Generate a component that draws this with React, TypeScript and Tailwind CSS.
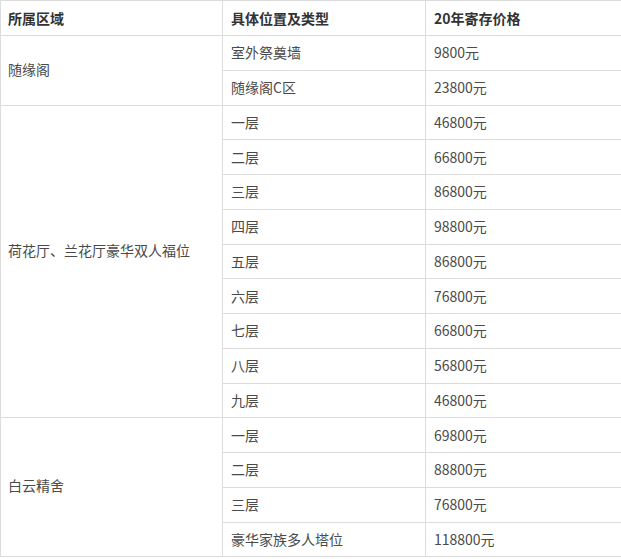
import React from "react";

const rows: { area?: string; span?: number; pad?: string; pos: string; price: string }[] = [
  { area: "随缘阁", span: 2, pad: "pb-[2px]", pos: "室外祭奠墙", price: "9800元" },
  { pos: "随缘阁C区", price: "23800元" },
  { area: "荷花厅、兰花厅豪华双人福位", span: 9, pad: "pb-[22px]", pos: "一层", price: "46800元" },
  { pos: "二层", price: "66800元" },
  { pos: "三层", price: "86800元" },
  { pos: "四层", price: "98800元" },
  { pos: "五层", price: "86800元" },
  { pos: "六层", price: "76800元" },
  { pos: "七层", price: "66800元" },
  { pos: "八层", price: "56800元" },
  { pos: "九层", price: "46800元" },
  { area: "白云精舍", span: 4, pad: "pb-[4px]", pos: "一层", price: "69800元" },
  { pos: "二层", price: "88800元" },
  { pos: "三层", price: "76800元" },
  { pos: "豪华家族多人塔位", price: "118800元" },
];

export default function App() {
  return (
    <div className="bg-white w-[621px] h-[559px]" style={{ fontFamily: '"Noto Sans CJK SC", "Noto Sans", sans-serif' }}>
      <table className="border-collapse table-fixed w-[621px] text-[14px] text-[#4a4a4a]">
        <colgroup>
          <col className="w-[222px]" />
          <col className="w-[203px]" />
          <col className="w-[196px]" />
        </colgroup>
        <thead>
          <tr className="h-[35px]">
            <th className="border border-[#dcdcdc] text-left font-bold text-[#333] pl-[7px] pr-2 py-0">所属区域</th>
            <th className="border border-[#dcdcdc] text-left font-bold text-[#333] pl-[8px] pr-2 py-0">具体位置及类型</th>
            <th className="border border-[#dcdcdc] text-left font-bold text-[#333] pl-[8px] pr-2 py-0">20年寄存价格</th>
          </tr>
        </thead>
        <tbody>
          {rows.map((r, i) => (
            <tr key={i} className="h-[34.75px]">
              {r.area && (
                <td rowSpan={r.span} className={`border border-[#dcdcdc] pl-[7px] pr-2 pt-0 align-middle ${r.pad}`}>
                  {r.area}
                </td>
              )}
              <td className="border border-[#dcdcdc] pl-[8px] pr-2 py-0">{r.pos}</td>
              <td className="border border-[#dcdcdc] pl-[8px] pr-2 py-0">{r.price}</td>
            </tr>
          ))}
        </tbody>
      </table>
    </div>
  );
}
